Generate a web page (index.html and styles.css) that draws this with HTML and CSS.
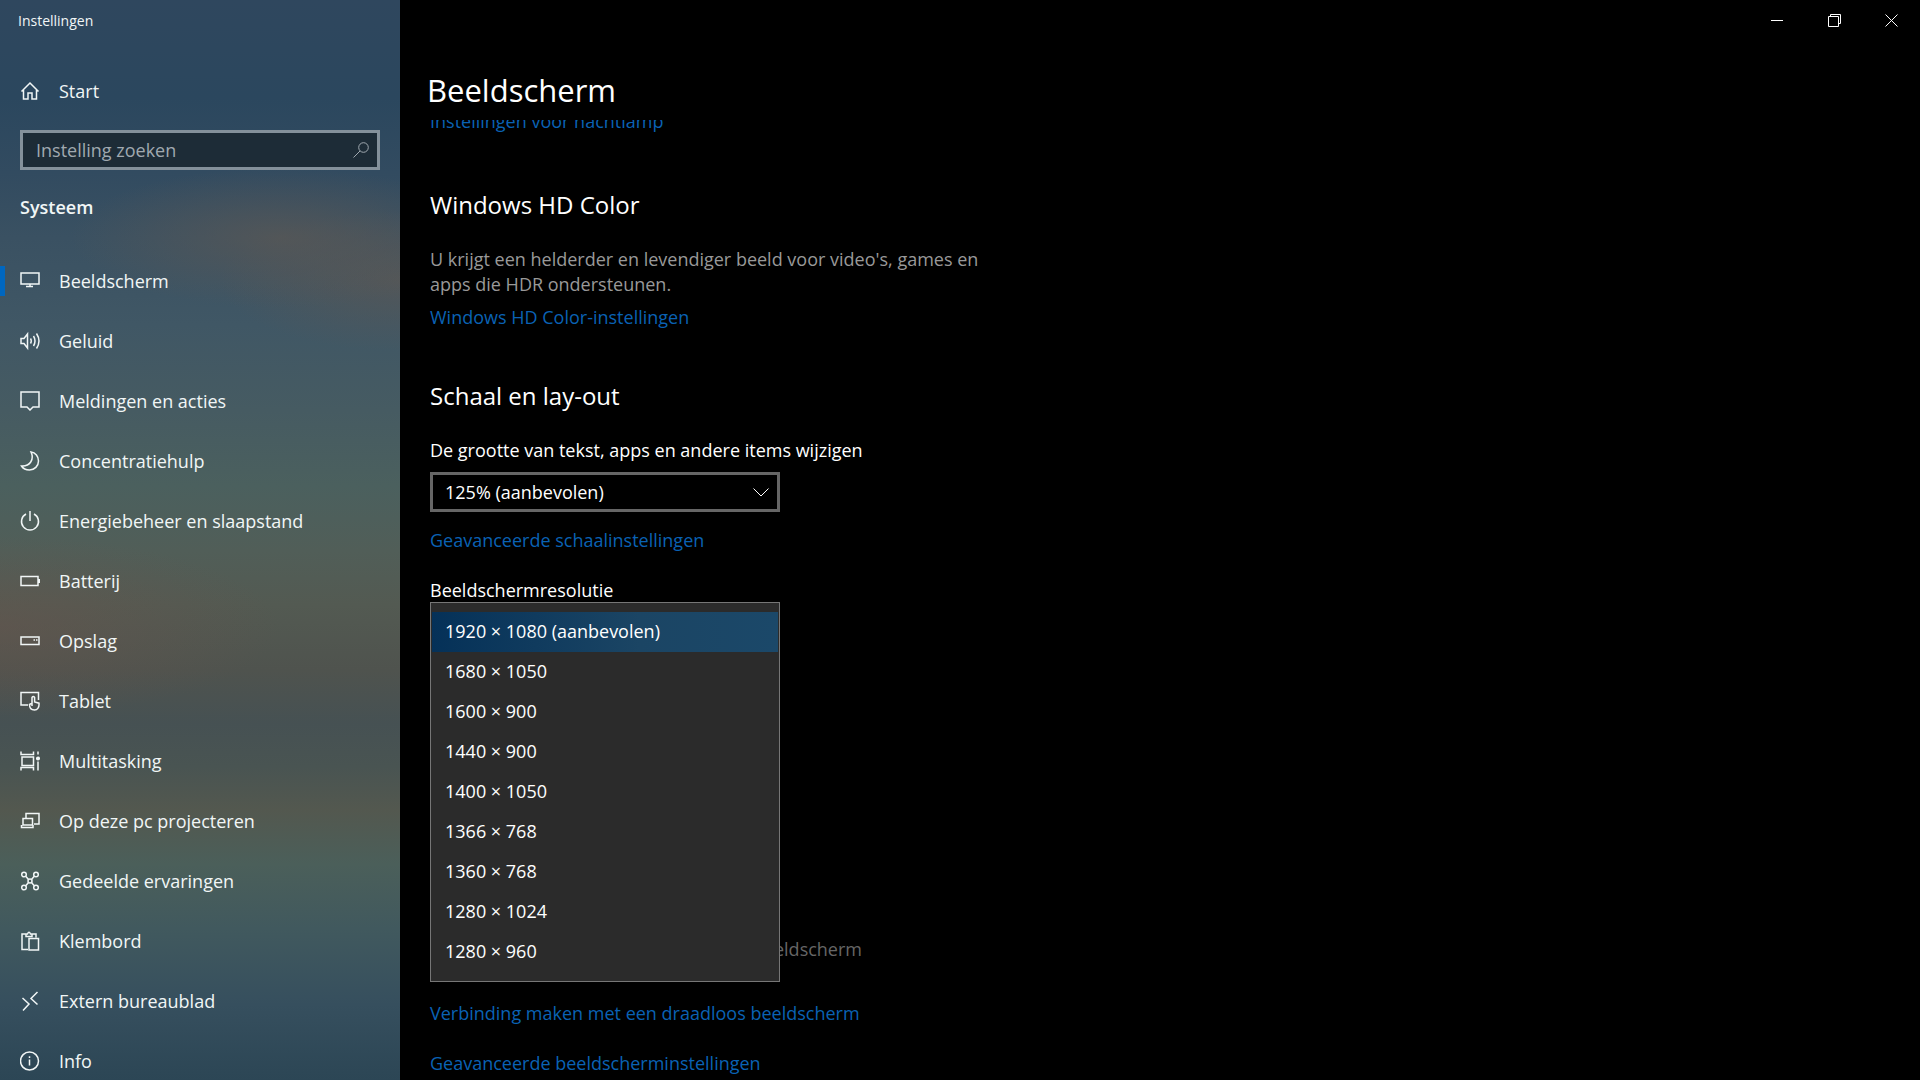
FILE: index.html
```html
<!DOCTYPE html>
<html lang="nl">
<head>
<meta charset="utf-8">
<title>Instellingen</title>
<link rel="stylesheet" href="styles.css">
</head>
<body>
<div class="window">
  <aside class="sidebar">
    <div class="app-title">Instellingen</div>
    <a class="nav-link home" href="#start">
      <svg class="icon" viewBox="0 0 20 20"><path d="M1.500 10.500 10 2l8.500 8.500M3.500 8.500V18H8v-6h4v6h4.500V8.500"/></svg>
      <span>Start</span>
    </a>
    <div class="search">
      <input class="search-input" type="search" placeholder="Instelling zoeken" aria-label="Instelling zoeken">
      <svg class="search-icon" viewBox="0 0 16 16"><circle cx="10.500" cy="5.500" r="4.800"/><path d="M7 9 .5 15.500"/></svg>
    </div>
    <h2 class="group">Systeem</h2>
    <nav class="nav">
      <a class="nav-link active" href="#beeldscherm"><svg class="icon" viewBox="0 0 20 20"><path d="M1 2h18v11H1zM10 13v2.500M6 15.500h7"/></svg><span>Beeldscherm</span></a>
      <a class="nav-link" href="#geluid"><svg class="icon" viewBox="0 0 20 20"><path d="M1 7.500h3L7.500 3v14L4 12.500H1zM10.500 7.500q1.500 2.500 0 5M13.500 5q3 5 0 10M16.500 2.500q5 7.500 0 15"/></svg><span>Geluid</span></a>
      <a class="nav-link" href="#meldingen"><svg class="icon" viewBox="0 0 20 20"><path d="M1 1h18v15h-6l-3 3-3-3H1z"/></svg><span>Meldingen en acties</span></a>
      <a class="nav-link" href="#concentratiehulp"><svg class="icon" viewBox="0 0 20 20"><path d="M11 1C15.500 1.500 18.500 5.500 18.500 10a9 9 0 0 1-9 9C6 19 3 17.500 1.500 15 10 15.500 14.500 8.500 11 1z"/></svg><span>Concentratiehulp</span></a>
      <a class="nav-link" href="#energiebeheer"><svg class="icon" viewBox="0 0 20 20"><path d="M10 0v10M6 3a8.500 8.500 0 1 0 8 0"/></svg><span>Energiebeheer en slaapstand</span></a>
      <a class="nav-link" href="#batterij"><svg class="icon" viewBox="0 0 20 20"><path d="M1 5.500h17v9H1zM19.300 8v4"/></svg><span>Batterij</span></a>
      <a class="nav-link" href="#opslag"><svg class="icon" viewBox="0 0 20 20"><path d="M1 6h18v7.500H1zM13.500 9h1.500M16 9h1.500"/></svg><span>Opslag</span></a>
      <a class="nav-link" href="#tablet"><svg class="icon" viewBox="0 0 20 20"><path d="M8 14H1V1.500h17.500V9M12 13V6.500q1.300-2 2.600 0V11l4.400 1.200c.4 4-1.500 6.800-4.500 6.800-3 0-5-2-5-5.500l2.500-1.500v3"/></svg><span>Tablet</span></a>
      <a class="nav-link" href="#multitasking"><svg class="icon" viewBox="0 0 20 20"><path d="M1 .5v3h12.500v-3M2 6h11.500v8.500H2zM1 19.500v-3h12.500v3M18 .5v3M18 10.500v9"/><circle class="solid" cx="18" cy="7.500" r="1.300"/></svg><span>Multitasking</span></a>
      <a class="nav-link" href="#projecteren"><svg class="icon" viewBox="0 0 20 20"><path d="M6 7.500V2.500h13V13h-5M3 7.500h9.500v6.500H3zM1.500 14v2.500h11.500V14"/></svg><span>Op deze pc projecteren</span></a>
      <a class="nav-link" href="#ervaringen"><svg class="icon" viewBox="0 0 20 20"><circle cx="4" cy="3.500" r="2.300"/><circle cx="16" cy="3.500" r="2.300"/><circle cx="4" cy="16.500" r="2.300"/><circle cx="16" cy="16.500" r="2.300"/><circle cx="10" cy="10" r="2"/><path d="M5.500 5 8.500 8.500M14.500 5l-3 3.500M5.500 15l3-3.500M14.500 15l-3-3.500"/></svg><span>Gedeelde ervaringen</span></a>
      <a class="nav-link" href="#klembord"><svg class="icon" viewBox="0 0 20 20"><path d="M8 18.500H2V3h4M12 3h4v3.500M6 5.500V3h1.500q1.500-3.500 3 0H12v2.500zM9 7.500h9.500v11.500H9z"/></svg><span>Klembord</span></a>
      <a class="nav-link" href="#extern"><svg class="icon" viewBox="0 0 20 20"><path d="M2.500 7 9 13l-6 6.500M17.500 1 11 7.500l6.500 6"/></svg><span>Extern bureaublad</span></a>
      <a class="nav-link" href="#info"><svg class="icon" viewBox="0 0 20 20"><circle cx="9.500" cy="10" r="9"/><path d="M9.500 8.500v6M9.500 5.300v1.700"/></svg><span>Info</span></a>
    </nav>
  </aside>

  <main class="main">
    <header class="header">
      <h1 class="title">Beeldscherm</h1>
      <div class="caption-buttons">
        <button class="caption" type="button" aria-label="Minimaliseren"><svg class="caption-icon" viewBox="0 0 13 13"><path d="M0 6.500h12"/></svg></button>
        <button class="caption" type="button" aria-label="Verkleinen"><svg class="caption-icon" viewBox="0 0 13 13"><path d="M.5 2.500h10v10H.5zM2.500 2.500v-2h10v9h-2"/></svg></button>
        <button class="caption" type="button" aria-label="Sluiten"><svg class="caption-icon" viewBox="0 0 13 13"><path d="M.5.5l12 12M12.500.5l-12 12"/></svg></button>
      </div>
    </header>
    <div class="scroller">
      <div class="content">
        <a class="link" href="#nachtlamp">Instellingen voor nachtlamp</a>

        <section class="section">
          <h2 class="heading">Windows HD Color</h2>
          <p class="description">U krijgt een helderder en levendiger beeld voor video's, games en apps die HDR ondersteunen.</p>
          <a class="link" href="#hd-color">Windows HD Color-instellingen</a>
        </section>

        <section class="section">
          <h2 class="heading">Schaal en lay-out</h2>
          <label class="label" for="scale">De grootte van tekst, apps en andere items wijzigen</label>
          <div class="dropdown">
            <select class="dropdown-select" id="scale"><option>125% (aanbevolen)</option></select>
            <svg class="chevron" viewBox="0 0 16 9"><path d="M.5.5 8 8 15.500.5"/></svg>
          </div>
          <a class="link" href="#schaal">Geavanceerde schaalinstellingen</a>
          <label class="label resolution-label" for="resolution">Beeldschermresolutie</label>
          <div class="popup-anchor">
            <select class="popup" id="resolution" size="9">
              <option selected>1920 × 1080 (aanbevolen)</option>
              <option>1680 × 1050</option>
              <option>1600 × 900</option>
              <option>1440 × 900</option>
              <option>1400 × 1050</option>
              <option>1366 × 768</option>
              <option>1360 × 768</option>
              <option>1280 × 1024</option>
              <option>1280 × 960</option>
            </select>
          </div>
        </section>

        <div class="displays">
          <p class="muted">beeldscherm</p>
          <a class="link" href="#draadloos">Verbinding maken met een draadloos beeldscherm</a>
          <a class="link" href="#geavanceerd">Geavanceerde beeldscherminstellingen</a>
        </div>
      </div>
    </div>
  </main>
</div>
</body>
</html>
```
FILE: styles.css
```css
* { box-sizing: border-box; }

body {
  margin: 0;
  background: #000;
  color: #fff;
  font: 18px/24px "Open Sans", "Noto Sans", sans-serif;
}

h1, h2, p { margin: 0; font-weight: 400; }
a { text-decoration: none; }
svg { fill: none; stroke: currentColor; }

.window {
  display: grid;
  grid-template-columns: 400px 1fr;
  height: 100vh;
  overflow: hidden;
}

/* Sidebar */
.sidebar {
  overflow: hidden;
  color: #f1f6f6;
  background:
    radial-gradient(ellipse 210px 70px at 70% 22%, rgba(92, 88, 84, .7), rgba(92, 88, 84, .35) 50%, rgba(92, 88, 84, 0)),
    radial-gradient(ellipse 180px 70px at 100% 26%, rgba(92, 88, 84, .7), rgba(92, 88, 84, 0)),
    radial-gradient(ellipse 280px 90px at 0 58%, rgba(104, 84, 76, .5), rgba(104, 84, 76, 0)),
    linear-gradient(#2f475e 0, #2b475e 9%, #324b60 16%, #3a5162 22%, #405765 30%, #465b62 38%, #4b605e 45%, #515e58 51%, #535a52 56%, #4f534e 62%, #465153 67%, #495452 71%, #53584f 75%, #4b5f5a 80%, #41595e 86%, #364f5e 93%, #2c4655 100%);
}

.app-title {
  padding: 9px 18px;
  font-size: 14px;
}

.nav-link {
  display: flex;
  align-items: center;
  gap: 19px;
  height: 60px;
  padding-left: 20px;
  color: inherit;
}

.home { margin-top: 19px; }

.icon {
  width: 20px;
  height: 20px;
  stroke-width: 1.500;
}

.icon .solid { fill: currentColor; }

.active {
  background: linear-gradient(#0067c0, #0067c0) 0 50% / 5px 30px no-repeat;
}

.search {
  display: flex;
  align-items: center;
  height: 40px;
  margin: 9px 20px 0;
  padding: 0 8px 0 13px;
  border: 3px solid #84919b;
  background: #1d2c37;
  color: #a0a9b0;
}

.search-input {
  flex: 1;
  min-width: 0;
  padding: 0;
  border: 0;
  outline: 0;
  background: none;
  color: inherit;
  font: inherit;
}

.search-input::placeholder { color: inherit; }

.search-icon { width: 16px; height: 16px; }

.group {
  padding: 25px 20px 32px;
  font-size: 18px;
  font-weight: 600;
}

/* Main area */
.main {
  display: flex;
  flex-direction: column;
  min-width: 0;
  overflow: hidden;
}

.header {
  display: flex;
  justify-content: space-between;
  height: 120px;
  padding-left: 27px;
}

.title {
  padding-top: 67px;
  font-size: 31px;
  line-height: 46px;
}

.caption-buttons { display: flex; }

.caption {
  display: grid;
  place-items: center;
  width: 57px;
  height: 40px;
  padding: 0;
  border: 0;
  background: none;
  color: #fff;
}

.caption-icon { width: 13px; height: 13px; }

.scroller {
  flex: 1;
  min-height: 0;
  overflow: hidden;
}

.content {
  margin-top: -11px;
  padding-left: 30px;
}

.section,
.displays {
  display: flex;
  flex-direction: column;
  align-items: flex-start;
}

.link {
  display: block;
  color: #0a62b4;
}

.heading {
  margin: 51px 0 26px;
  font-size: 24px;
  line-height: 32px;
}

.content > .link { margin-bottom: 56px; }

.section:first-of-type .heading { margin-top: 0; }

.description {
  max-width: 560px;
  margin-bottom: 8px;
  color: #999;
  line-height: 25px;
}

.dropdown {
  display: grid;
  align-items: center;
  width: 350px;
  margin: 10px 0 16px;
}

.dropdown-select,
.chevron { grid-area: 1 / 1; }

.dropdown-select {
  height: 40px;
  padding: 0 12px 1px;
  border: 3px solid #666;
  border-radius: 0;
  appearance: none;
  background: #000;
  color: inherit;
  font: inherit;
}

.chevron {
  justify-self: end;
  width: 16px;
  height: 9px;
  margin-right: 11px;
  pointer-events: none;
}

.resolution-label { margin-top: 26px; }

.popup-anchor {
  position: relative;
  width: 350px;
  height: 40px;
}

.popup {
  position: absolute;
  top: 0;
  left: 0;
  z-index: 1;
  width: 100%;
  height: 380px;
  padding: 9px 1px;
  overflow: hidden;
  border: 1px solid #767676;
  border-radius: 0;
  outline: 0;
  background: #2b2b2b;
  color: #fff;
  font: inherit;
}

.popup option {
  height: 40px;
  padding: 7px 13px;
}

.popup option:checked {
  background: linear-gradient(90deg, #053158, #1b4564 60%, #1b4869);
  color: #fff;
}

.displays {
  gap: 26px;
  margin-top: 295px;
}

.muted {
  width: 432px;
  margin-bottom: 14px;
  color: #666;
  text-align: right;
}
```
